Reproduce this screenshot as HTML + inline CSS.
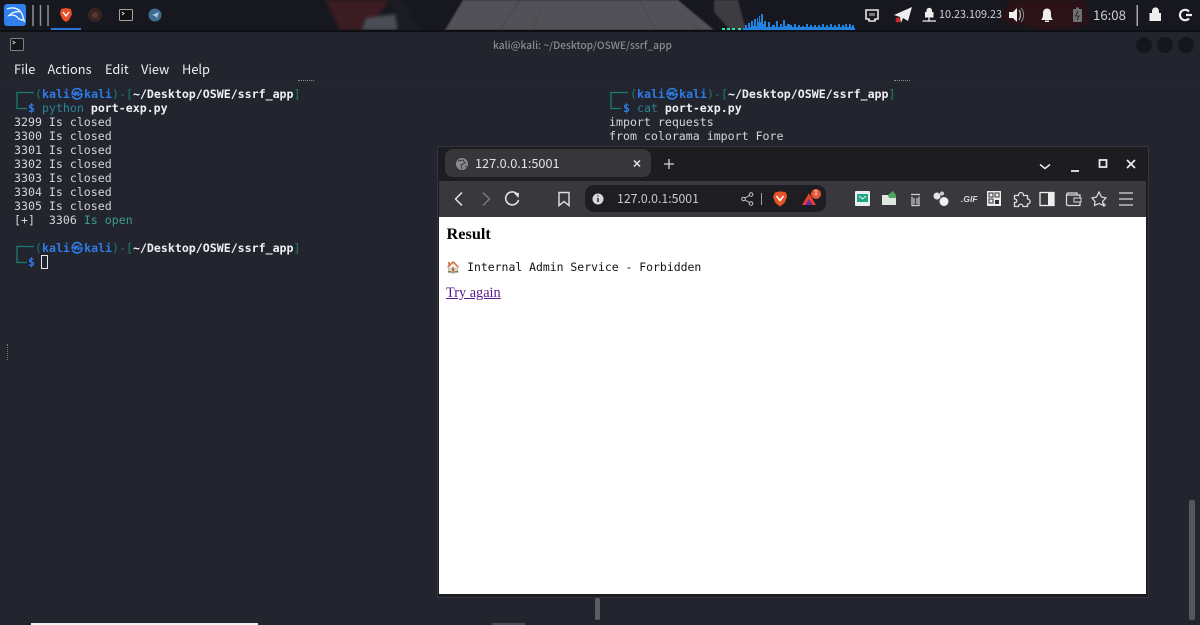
<!DOCTYPE html>
<html><head><meta charset="utf-8"><style>
html,body{margin:0;padding:0;width:1200px;height:625px;overflow:hidden;background:#22252e}
*{box-sizing:border-box}
.a{position:absolute;white-space:pre}
.ui{font-family:"Noto Sans CJK SC","Liberation Sans",sans-serif}
.t{position:absolute;white-space:pre;font:11.6px/14px "DejaVu Sans Mono","Liberation Mono",monospace;color:#d4d6d8}
.b{color:#2f7be8;font-weight:bold}.g{color:#1b7d72}.w{color:#eef0f2;font-weight:bold}.c{color:#2c8496}
.k{display:inline-block;width:14.2px;text-align:center;color:#2f7be8;font-weight:bold}
</style></head><body>
<svg class="a" style="left:0;top:0" width="1200" height="32" viewBox="0 0 1200 32">
<rect width="1200" height="32" fill="#17181f"/>
<g style="filter:blur(1.5px)">
<path d="M325 0H390L375 20L365 30H340Z" fill="#3a1c22"/>
<path d="M366 18L395 14L398 30H362Z" fill="#4a4d55"/>
<path d="M390 0H402L420 30H400Z" fill="#1c1d24"/>
<path d="M1010 0H1085L1090 24L1050 32L1000 20Z" fill="#2a1217"/>
</g>
<g style="filter:blur(.7px)">
<path d="M445 30L463 0H678L714 30Z" fill="#515157"/>
<path d="M520 0L500 30M540 10L533 30M640 0L655 30M690 22L700 30" stroke="#48484e" stroke-width="1.200" fill="none"/>
<path d="M714 0H738L746 30H730L714 12Z" fill="#3c3c41"/>
</g>
<rect y="30" width="1200" height="2" fill="#0e0f13"/>
<rect x="4" y="4" width="22" height="22" rx="3" fill="#2f80ed"/>
<path d="M7 9C12 7 17 8 20 11C23 14 23 18 24.500 22M20 11.500C15 11.500 11 13 9 15.500C13 14.500 16 15.500 18 18C19.500 19.500 21 20 23 20" fill="none" stroke="#e8f1ff" stroke-width="1.400"/>
<path d="M33 5V26M40.500 5V26M48 5V26" stroke="#8d8f94" stroke-width="1.500"/>
<rect x="51" y="28" width="30" height="2" fill="#2d74d6"/>
<path d="M61 9L66 8L71 9L72 14L69 20L66 22L63 20L60 14Z" fill="#e9502a"/><path d="M63 12L66 16L69 12" stroke="#fff" stroke-width="1.300" fill="none"/>
<circle cx="95" cy="15" r="7" fill="#3a2421"/><circle cx="95" cy="15" r="3" fill="#57392f"/>
<rect x="119.500" y="9.500" width="13" height="11" rx="1" fill="#111" stroke="#a5a5a5"/><path d="M122 12L124 13.500L122 15" stroke="#ddd" fill="none"/>
<circle cx="155" cy="15" r="6.500" fill="#3e6d8f"/><path d="M152 15L159 12L157 18L155 16Z" fill="#a5c7df"/>
<rect x="722" y="28" width="3" height="2" fill="#2fe0a5"/><rect x="727" y="28" width="3" height="2" fill="#2fe0a5"/><rect x="732" y="28" width="3" height="2" fill="#2fe0a5"/><rect x="738" y="28" width="3" height="2" fill="#2fe0a5"/>
<path d="M743 30V28H745V25H747V28H748V23H750V27H751V21H753V26H754V19H756V26H757V18H758V22H759V16H760V22H761V14H763V24H764V21H766V27H768V22H770V27H772V25H775V27H776V21H778V27H780V24H782V27H783V20H785V26H787V24H790V25H792V27H794V24H796V27H798V25H800V27H802V26H804V27H806V24H808V27H810V25H812V27H814V25H816V27H818V25H820V27H822V24H824V27H826V25H828V27H830V24H832V27H834V25H836V27H838V24H840V27H842V25H844V27H845V24H847V27H849V24H851V27H852V25H854V28H855V30Z" fill="#2382e0"/>
<path d="M866 10H878V19H875V21H869V19H866Z" fill="none" stroke="#e6e6e6" stroke-width="1.600"/><path d="M869 13H875V16H869Z" fill="#777"/>
<path d="M894 15L912 7L908 21L903 18L901 23L900 17Z" fill="#eeeeee"/><circle cx="898" cy="20" r="2.500" fill="#d2232a"/>
<path d="M926.500 12V10.500C926.500 7 932 7 932 10.500V12H933.500V17.500H925V12Z" fill="#eee"/><path d="M922.500 21H936M929 17.500V21" stroke="#eee" stroke-width="1.300"/>
<path d="M1009 12H1013L1017 8V22L1013 18H1009Z" fill="#eee"/><path d="M1019 10C1021 13 1021 17 1019 20" fill="none" stroke="#aaa" stroke-width="1.300"/><path d="M1021 8C1024.500 12 1024.500 18 1021 22" fill="none" stroke="#888" stroke-width="1"/>
<path d="M1047 20H1041C1043 18 1043 16 1043 13C1043 10 1045 8.500 1047 8.500C1049 8.500 1051 10 1051 13C1051 16 1051 18 1053 20Z" fill="#eee"/><rect x="1045" y="20.500" width="4" height="1.500" fill="#eee"/>
<rect x="1073" y="9" width="9" height="13" rx="1" fill="#6f7072"/><rect x="1076" y="7.500" width="3" height="2" fill="#6f7072"/><path d="M1078 11L1075.500 16H1079L1077 20" stroke="#2b2b2b" fill="none"/>
<rect x="1136.500" y="5" width="1.500" height="21" fill="#aaa"/>
<path d="M1152 13V11.500C1152 6 1159 6 1159 11.500V13H1161V21H1149.500V13Z" fill="#eee"/>
<path d="M1189 11.500A5.200 5.200 0 1 0 1189 18.500" fill="none" stroke="#eee" stroke-width="2.200"/><path d="M1186 15H1192" stroke="#eee" stroke-width="2.200"/>
</svg>
<div class="a ui" style="left:939px;top:6px;font-size:10.800px;line-height:16px;color:#d2d2d2">10.23.109.23</div>
<div class="a ui" style="left:1093px;top:5px;font-size:13.200px;line-height:20px;color:#d0d0d0">16:08</div>

<!-- terminal -->
<div class="a" style="left:0;top:32px;width:1200px;height:593px;background:#22252e"></div>
<svg class="a" style="left:0;top:32px" width="1200" height="50">
<rect x="10.500" y="6.500" width="13" height="12" rx="1" fill="#15161a" stroke="#7f8082"/><path d="M12.500 9L15 10.500L12.500 12" stroke="#ccc" fill="none"/>
<circle cx="1144" cy="13" r="8" fill="#15171c"/><circle cx="1165" cy="13" r="8" fill="#15171c"/><circle cx="1186" cy="13" r="8" fill="#15171c"/>
</svg>
<div class="a ui" style="left:493px;top:37px;font-size:10.200px;line-height:16px;font-weight:500;color:#8a8c90">kali@kali: ~/Desktop/OSWE/ssrf_app</div>
<div class="a ui" style="left:14px;top:59px;font-size:12.800px;line-height:19px;color:#eceef0">File</div>
<div class="a ui" style="left:47.500px;top:59px;font-size:12.800px;line-height:19px;color:#eceef0">Actions</div>
<div class="a ui" style="left:105px;top:59px;font-size:12.800px;line-height:19px;color:#eceef0">Edit</div>
<div class="a ui" style="left:141px;top:59px;font-size:12.800px;line-height:19px;color:#eceef0">View</div>
<div class="a ui" style="left:182px;top:59px;font-size:12.800px;line-height:19px;color:#eceef0">Help</div>
<div class="a" style="left:298px;top:80px;width:16px;height:1px;border-top:1px dotted #8a8c90"></div>
<div class="a" style="left:894px;top:80px;width:16px;height:1px;border-top:1px dotted #8a8c90"></div>
<div class="a" style="left:0;top:82px;width:1200px;height:1px;background:#262932"></div>
<div class="a" style="left:7px;top:344px;width:1px;height:16px;border-left:1px dotted #777"></div>

<svg class="a" style="left:0;top:80px" width="640" height="200" fill="none" stroke="#1b7d72" stroke-width="1.300">
<path d="M34 12.500H17V28.500H27"/><path d="M34 166.500H17V182.500H27"/><path d="M628 12.500H611V28.500H621"/>
</svg>
<div class="t" style="left:35px;top:87px"><span class="g">(</span><span class="b">kali</span><span class="k">㉿</span><span class="b">kali</span><span class="g">)-[</span><span class="w">~/Desktop/OSWE/ssrf_app</span><span class="g">]</span></div>
<div class="t" style="left:28px;top:101px"><span class="b">$</span> <span class="c">python</span> <span class="w">port-exp.py</span></div>
<div class="t" style="left:14px;top:115px">3299 Is closed
3300 Is closed
3301 Is closed
3302 Is closed
3303 Is closed
3304 Is closed
3305 Is closed
[+]  3306 <span style="color:#3f9a8c">Is open</span></div>
<div class="t" style="left:35px;top:241px"><span class="g">(</span><span class="b">kali</span><span class="k">㉿</span><span class="b">kali</span><span class="g">)-[</span><span class="w">~/Desktop/OSWE/ssrf_app</span><span class="g">]</span></div>
<div class="t" style="left:28px;top:255px"><span class="b">$</span></div>
<div class="a" style="left:41px;top:255px;width:7px;height:14px;border:1.500px solid #e6e6e6"></div>

<div class="t" style="left:630px;top:87px"><span class="g">(</span><span class="b">kali</span><span class="k">㉿</span><span class="b">kali</span><span class="g">)-[</span><span class="w">~/Desktop/OSWE/ssrf_app</span><span class="g">]</span></div>
<div class="t" style="left:623px;top:101px"><span class="b">$</span> <span class="c">cat</span> <span class="w">port-exp.py</span></div>
<div class="t" style="left:609px;top:115px">import requests
from colorama import Fore</div>

<!-- browser -->
<div class="a" style="left:437px;top:146px;width:712px;height:452px;background:#1c1c21;border:1px solid #34363c"></div>
<div class="a" style="left:439px;top:181px;width:707px;height:36px;background:#39393d"></div>
<div class="a" style="left:445px;top:149px;width:206px;height:28px;background:#37373b;border-radius:8px"></div>
<svg class="a" style="left:439px;top:147px" width="707" height="70" fill="none">
<circle cx="23" cy="17" r="6" fill="#8b8b8e"/><path d="M19 14L24 13L26 16L22 18L23 22M26 19L28 20" stroke="#37373b"/>
<path d="M195 13.500L201 19.500M201 13.500L195 19.500" stroke="#e6e6e6" stroke-width="1.500"/>
<path d="M230 12V22M225 17H235" stroke="#d4d4d4" stroke-width="1.300"/>
<path d="M23 45.500L16.500 52L23 58.500" stroke="#e2e2e2" stroke-width="1.500"/>
<path d="M44 45.500L50.500 52L44 58.500" stroke="#77777a" stroke-width="1.500"/>
<path d="M78 47A6.500 6.500 0 1 0 79.500 53" stroke="#e2e2e2" stroke-width="1.600"/><path d="M74.500 45.500L80 46L79.500 51Z" fill="#e2e2e2"/>
<path d="M120 45.500H130V58.500L125 54.500L120 58.500Z" stroke="#e2e2e2" stroke-width="1.400"/>
<rect x="146" y="38" width="241" height="27" rx="9" fill="#1e1e22"/>
<circle cx="159" cy="52" r="5.500" fill="#d8d8d8"/><path d="M159 51V55M159 48.500V49.500" stroke="#1e1e22" stroke-width="1.400"/>
<circle cx="304.500" cy="52" r="1.800" stroke="#c8c8c8"/><circle cx="312" cy="47.500" r="1.800" stroke="#c8c8c8"/><circle cx="312" cy="56.500" r="1.800" stroke="#c8c8c8"/><path d="M306 51L310.500 48.500M306 53L310.500 55.500" stroke="#c8c8c8"/>
<path d="M322.500 46V58" stroke="#a0a0a0"/>
<path d="M336 45.500L340 44.500L343 44.500L347 45.500L348 50L345.500 56L341 59.500L336.500 56L334 50Z" fill="#e9552a"/><path d="M337.500 49L341 53.500L344.500 49" stroke="#fff" stroke-width="1.500"/>
<path d="M363 58L370 46L377 58Z" fill="#e8412e"/><path d="M366 58L370 52L374 58Z" fill="#6b2f9a"/>
<circle cx="377" cy="47" r="5" fill="#e8573a"/>
<rect x="416" y="44" width="15" height="15" rx="1" fill="#e8eee9"/><path d="M418 47H429V55H418Z" fill="#1fa58a"/><path d="M420 49L423.500 52L427 49" stroke="#eee"/>
<path d="M443 48H457V58H443Z" fill="#dfe5df"/><path d="M449 48L454 44L457 48V51H450Z" fill="#4aa65a"/>
<path d="M472 47.500H481M473 49.500V58.500H480V49.500M475 51V57M478 51V57" stroke="#d2d2d2" stroke-width="1.200"/>
<circle cx="498" cy="49" r="3.500" fill="#e5e5e5"/><circle cx="503" cy="46.500" r="2" fill="#cfcfcf"/><circle cx="505" cy="54.500" r="4.500" fill="#f0f0f0"/>
<rect x="548" y="44" width="14" height="15" fill="#ececec"/><path d="M550 46H554V50H550ZM556 46H560V50H556ZM550 52H554V56H550Z" stroke="#333"/><path d="M556 53H560V57H556Z" fill="#333"/>
<path d="M575.500 48.500H579.500C579.500 44.500 584.500 44.500 584.500 48.500H588.500V52C592 52 592 57 588.500 57V59.500H584C584 56.500 579.500 56.500 579.500 59.500H575.500V55.500C578.500 55.500 578.500 52 575.500 52Z" stroke="#dcdcdc" stroke-width="1.300"/>
<rect x="601" y="45.500" width="14" height="13" stroke="#eee" stroke-width="1.300"/><rect x="609" y="45.500" width="6" height="13" fill="#eee"/>
<path d="M627.500 47.500V57C627.500 58 628 58.500 629 58.500H641V48H629C627.500 48 627.500 46 629 46H638V48" stroke="#dcdcdc" stroke-width="1.200"/><rect x="635" y="51" width="7" height="4" fill="#39393d" stroke="#dcdcdc"/>
<path d="M660 45L662.500 50L667 51L663.500 54.500L664.500 58.500L660 56.500L655.500 58.500L656 54.500L653 51L657.500 50Z" stroke="#e0e0e0" stroke-width="1.200"/><path d="M665 56V60M663 58H667" stroke="#e0e0e0"/>
<path d="M680 46H694M680 52H694M680 58H694" stroke="#d8d8d8" stroke-width="1.300"/>
<path d="M601 17.500L606 21.500L611 17.500" stroke="#e8e8e8" stroke-width="1.500"/>
<path d="M632 24H640" stroke="#e8e8e8" stroke-width="1.800"/>
<rect x="660.500" y="13" width="7" height="7" stroke="#e8e8e8" stroke-width="1.800"/>
<path d="M688 13L696 21M696 13L688 21" stroke="#e8e8e8" stroke-width="1.800"/>
</svg>
<div class="a" style="left:475px;top:153px;font:12.700px/20px 'Noto Sans CJK SC','Liberation Sans',sans-serif;color:#e4e4e4">127.0.0.1:5001</div>
<div class="a" style="left:617px;top:188px;font:12.300px/20px 'Noto Sans CJK SC','Liberation Sans',sans-serif;color:#c9c9c9">127.0.0.1:5001</div>
<div class="a" style="left:814px;top:189px;font:7px/10px 'Liberation Sans',sans-serif;color:#fff">1</div>
<div class="a" style="left:961px;top:194px;font:italic bold 8.500px/10px 'Liberation Sans',sans-serif;color:#d8d8d8">.GIF</div>

<div class="a" style="left:439px;top:217px;width:707px;height:377px;background:#fff"></div>
<div class="a" style="left:446.500px;top:224px;font:bold 16.300px/19px 'Liberation Serif',serif;color:#000">Result</div>
<div class="a" style="left:446px;top:260px;font:11.450px/15px 'DejaVu Sans Mono','Liberation Mono',monospace;color:#111">🏠 Internal Admin Service - Forbidden</div>
<div class="a" style="left:446px;top:285px;font:14.300px/17px 'Liberation Serif',serif;color:#551a8b;text-decoration:underline">Try again</div>

<!-- scrollbars & bottom -->
<div class="a" style="left:595px;top:598px;width:5px;height:22px;background:#5a5d63;border-radius:2px"></div>
<div class="a" style="left:1189px;top:500px;width:6px;height:120px;background:#55585e;border-radius:2px"></div>
<div class="a" style="left:31px;top:623px;width:227px;height:2px;background:#f1eff2"></div>
<div class="a" style="left:492px;top:623px;width:33px;height:2px;background:#4a4d54"></div>
</body></html>
